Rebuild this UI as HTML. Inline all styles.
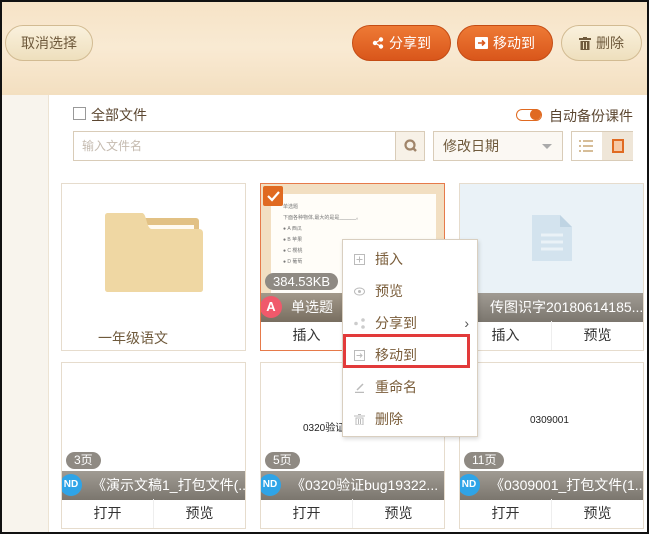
<!DOCTYPE html>
<html><head><meta charset="utf-8"><style>
*{margin:0;padding:0;box-sizing:border-box}
body{width:649px;height:534px;overflow:hidden;font-family:"Liberation Sans","Noto Sans CJK SC",sans-serif;background:#fff;position:relative}
.abs{position:absolute}
.frame{position:absolute;left:0;top:0;width:649px;height:534px;border:2px solid #111;z-index:50;pointer-events:none}
.hdr{left:0;top:0;width:649px;height:95px;background:linear-gradient(180deg,#f6e3c6 0%,#f9ead3 50%,#f3dfc0 100%)}
.btn{position:absolute;top:25px;height:36px;border-radius:18px;font-size:14px;display:flex;align-items:center;justify-content:center;gap:5px}
.bl{background:linear-gradient(#faf1dd,#eedfbd);border:1px solid #d2bb92;color:#6f5a3c}
.bo{background:linear-gradient(#ee7a35,#d9561b);border:1px solid #c44c14;color:#fff}
.side{left:0;top:95px;width:49px;height:439px;background:#f8f4ed;border-right:1px solid #ede3d3}
.card{position:absolute;width:185px;height:168px;border:1px solid #e6dccd;background:#fff;overflow:hidden}
.band{position:absolute;left:0;width:100%;height:29px;background:linear-gradient(#a09b93,#7b766e);color:#fff;font-size:14px;line-height:29px;padding-left:30px;white-space:nowrap;overflow:hidden}
.bts{position:absolute;left:0;bottom:0;width:100%;height:29px;display:flex;font-size:14px;color:#333}
.bts div{flex:1;text-align:center;line-height:29px}
.bts div+div{border-left:1px solid #eee}
.pill{position:absolute;background:#8f8a83;color:#fff;font-size:12px;border-radius:9px;height:17px;line-height:17px;padding:0 8px}
.nd{position:absolute;left:-2px;width:22px;height:22px;border-radius:11px;background:#2fa4e7;color:#fff;font-size:10px;font-weight:bold;line-height:22px;text-align:center}
.menu{left:342px;top:239px;width:136px;height:198px;background:#fff;border:1px solid #d9cfc0;box-shadow:1px 2px 4px rgba(0,0,0,.15);z-index:10}
.mi{position:absolute;left:0;width:100%;height:32px;font-size:14px;color:#7a5d3a;line-height:32px;padding-left:32px}
.ic{position:absolute;left:11px;top:11px;width:11px;height:11px;color:#bbb}
</style></head><body>
<div class="abs hdr"></div>
<div class="btn bl" style="left:5px;width:88px">取消选择</div>
<div class="btn bo" style="left:352px;width:99px"><svg width="12" height="12" viewBox="0 0 12 12"><circle cx="3" cy="6" r="2.2" fill="#fff"/><circle cx="9" cy="2.5" r="2.2" fill="#fff"/><circle cx="9" cy="9.5" r="2.2" fill="#fff"/><path d="M3 6L9 2.5M3 6L9 9.5" stroke="#fff" stroke-width="1.3"/></svg>分享到</div>
<div class="btn bo" style="left:457px;width:96px"><svg width="13" height="12" viewBox="0 0 13 12"><rect x="0" y="0" width="13" height="12" rx="1" fill="#fff"/><path d="M3 6h6M7 3.5L9.5 6 7 8.5" stroke="#d9561b" stroke-width="1.6" fill="none"/></svg>移动到</div>
<div class="btn bl" style="left:561px;width:81px"><svg width="12" height="13" viewBox="0 0 12 13"><rect x="0" y="1" width="12" height="2" fill="#6f5a3c"/><rect x="4" y="0" width="4" height="1.5" fill="#6f5a3c"/><rect x="1.5" y="4" width="9" height="9" fill="#6f5a3c"/><path d="M4.5 5v7M7.5 5v7" stroke="#eedfbd"/></svg>删除</div>
<div class="abs side"></div>
<div class="abs" style="left:73px;top:107px;width:13px;height:13px;border:1px solid #999;background:#fff"></div>
<div class="abs" style="left:91px;top:105px;font-size:14px;color:#5b4630">全部文件</div>
<div class="abs" style="left:516px;top:109px;width:26px;height:12px;border-radius:6px;border:1.5px solid #e06a21;background:#fff"><div style="position:absolute;right:0;top:-1px;width:11px;height:11px;border-radius:6px;background:#e06a21"></div></div>
<div class="abs" style="left:549px;top:106px;font-size:14px;color:#5b4630">自动备份课件</div>
<div class="abs" style="left:73px;top:131px;width:323px;height:30px;border:1px solid #d9ccb8;background:#fff;font-size:12px;color:#c5bbb0;line-height:28px;padding-left:8px">输入文件名</div>
<div class="abs" style="left:395px;top:131px;width:30px;height:30px;border:1px solid #d9ccb8;background:#f7f1e7"><svg width="30" height="28" viewBox="0 0 30 28"><circle cx="14" cy="13" r="4.5" stroke="#a0856a" stroke-width="2.2" fill="none"/><path d="M17 16l3 3" stroke="#a0856a" stroke-width="2.5"/></svg></div>
<div class="abs" style="left:433px;top:131px;width:130px;height:30px;border:1px solid #d9ccb8;background:#fbf8f3;font-size:14px;color:#6f5a3c;line-height:28px;padding-left:9px">修改日期<span style="position:absolute;right:10px;top:12px;border:5px solid transparent;border-top:5px solid #aaa"></span></div>
<div class="abs" style="left:571px;top:131px;width:62px;height:30px;border:1px solid #d9ccb8;background:#fff"><div style="position:absolute;left:30px;top:0;width:31px;height:28px;background:#efe6d8"></div><svg style="position:absolute;left:7px;top:8px" width="14" height="12"><path d="M0 1h2M4 1h10M0 6h2M4 6h10M0 11h2M4 11h10" stroke="#c9a777" stroke-width="1.5"/></svg><div style="position:absolute;left:40px;top:7px;width:12px;height:14px;border:2px solid #e06a21;background:#f6c9a6"></div></div>

<!-- row1 -->
<div class="card" style="left:61px;top:183px"><svg style="position:absolute;left:42px;top:28px" width="100" height="82" viewBox="0 0 100 82"><rect x="38" y="6" width="57" height="35" rx="3" fill="#e2c184"/><rect x="42" y="13" width="48" height="15" fill="#fffaf0"/><path d="M4 1h34c5 0 4 16 10 16h47c3 0 4 2 4 4v56c0 2-1 3-3 3H4c-2 0-3-1-3-3V4c0-2 1-3 3-3z" fill="#efd7a3"/></svg><div style="position:absolute;left:36px;top:144px;font-size:14px;color:#6f5a3c">一年级语文</div></div>

<div class="card" style="left:260px;top:183px;border-color:#e67a4a">
<div style="position:absolute;left:0;top:0;width:100%;height:110px;background:#f2dfc2"><div style="position:absolute;left:10px;top:10px;width:165px;height:100px;background:#fffdf8;font-size:5px;color:#777;padding:8px 12px;line-height:11px">单选题<br>下面各种物体,最大的是是______。<br>● A 西瓜<br>● B 苹果<br>● C 樱桃<br>● D 葡萄</div></div>
<div style="position:absolute;left:2px;top:2px;width:20px;height:20px;background:#e06a21;border-radius:2px"><svg width="20" height="20"><path d="M5 10l4 4 7-8" stroke="#fff" stroke-width="2.2" fill="none"/></svg></div>
<div class="pill" style="left:4px;top:89px;font-size:13px">384.53KB</div>
<div class="band" style="top:109px;background:linear-gradient(#a3998a,#786e60)">单选题</div>
<div class="nd" style="top:112px;left:-1px;background:#f0596b;font-size:13px">A</div>
<div class="bts"><div>插入</div><div>预览</div></div></div>

<div class="card" style="left:459px;top:183px"><div style="position:absolute;left:0;top:0;width:100%;height:110px;background:#eaf2f7"><svg style="position:absolute;left:72px;top:31px" width="40" height="46" viewBox="0 0 40 46"><path d="M0 0h28l12 12v34H0z" fill="#d3e3ee"/><path d="M28 0v12h12" fill="#bfd4e3"/><path d="M9 20h22M9 27h22M9 34h22" stroke="#eaf2f7" stroke-width="3"/></svg></div><div class="band" style="top:109px">传图识字20180614185...</div><div class="nd" style="top:112px;left:-12px"></div><div class="bts"><div>插入</div><div>预览</div></div></div>

<!-- row2 -->
<div class="card" style="left:61px;top:362px;height:167px"><div class="pill" style="left:4px;top:89px">3页</div><div class="band" style="top:108px">《演示文稿1_打包文件(...</div><div class="nd" style="top:111px">ND</div><div class="bts"><div>打开</div><div>预览</div></div></div>
<div class="card" style="left:260px;top:362px;height:167px"><div style="position:absolute;left:42px;top:56px;font-size:10px;color:#222">0320验证</div><div class="pill" style="left:4px;top:89px">5页</div><div class="band" style="top:108px">《0320验证bug19322...</div><div class="nd" style="top:111px">ND</div><div class="bts"><div>打开</div><div>预览</div></div></div>
<div class="card" style="left:459px;top:362px;height:167px"><div style="position:absolute;left:70px;top:52px;font-size:10px;color:#222">0309001</div><div class="pill" style="left:4px;top:89px">11页</div><div class="band" style="top:108px">《0309001_打包文件(1...</div><div class="nd" style="top:111px">ND</div><div class="bts"><div>打开</div><div>预览</div></div></div>

<div class="abs menu">
<div class="mi" style="top:3px"><svg class="ic" viewBox="0 0 11 11"><rect x=".5" y=".5" width="10" height="10" fill="none" stroke="#bbb"/><path d="M5.5 2.5v6M2.5 5.5h6" stroke="#bbb"/></svg>插入</div>
<div class="mi" style="top:35px"><svg class="ic" viewBox="0 0 11 11"><ellipse cx="5.5" cy="5.5" rx="5" ry="3.5" fill="none" stroke="#bbb"/><circle cx="5.5" cy="5.5" r="1.5" fill="#bbb"/></svg>预览</div>
<div class="mi" style="top:67px"><svg class="ic" viewBox="0 0 11 11"><circle cx="2" cy="5.5" r="1.8" fill="#ccc"/><circle cx="9" cy="2" r="1.8" fill="#ccc"/><circle cx="9" cy="9" r="1.8" fill="#ccc"/></svg>分享到<span style="position:absolute;right:8px;top:0;color:#555">›</span></div>
<div class="mi" style="top:99px"><svg class="ic" viewBox="0 0 11 11"><rect x=".5" y=".5" width="10" height="10" fill="none" stroke="#bbb"/><path d="M2.5 5.5h5M6 3.5l2 2-2 2" stroke="#bbb" fill="none"/></svg>移动到</div>
<div class="mi" style="top:131px"><svg class="ic" viewBox="0 0 11 11"><path d="M1 10.5h9M3 8l6-6" stroke="#bbb" stroke-width="1.5"/></svg>重命名</div>
<div class="mi" style="top:163px"><svg class="ic" viewBox="0 0 11 11"><path d="M0 2h11M4 .5h3M2 4h7v7H2zM4.5 5v5M6.5 5v5" stroke="#bbb" fill="none"/></svg>删除</div>
</div>
<div class="abs" style="left:343px;top:334px;width:127px;height:34px;border:3px solid #e23a3a;z-index:11"></div>
<div class="frame"></div>
</body></html>
